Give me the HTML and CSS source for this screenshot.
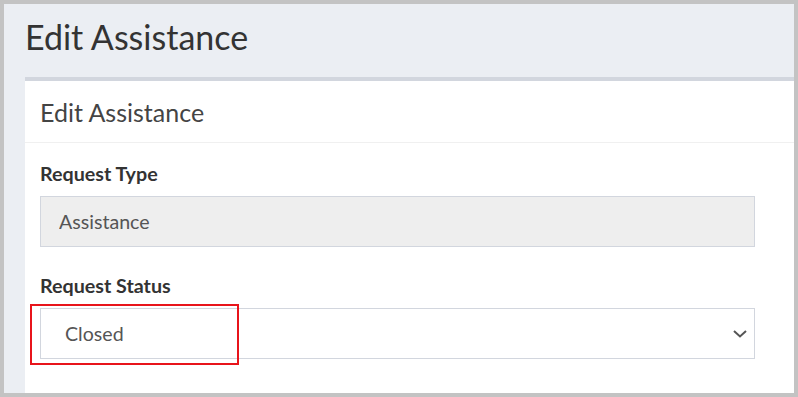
FILE: index.html
```html
<!DOCTYPE html>
<html lang="en">
<head>
    <meta charset="UTF-8">
    <meta name="viewport" content="width=device-width, initial-scale=1.0">
    <title>Edit Assistance</title>
    <link rel="stylesheet" href="styles.css">
</head>
<body>
    <div class="frame">
        <section class="content-header">
            <h1>Edit Assistance</h1>
        </section>
        <div class="box">
            <div class="box-header">
                <h3>Edit Assistance</h3>
            </div>
            <form class="box-body">
                <div class="form-group">
                    <label for="request_type">Request Type</label>
                    <input type="text" id="request_type" value="Assistance" disabled>
                </div>
                <div class="form-group">
                    <label for="request_status">Request Status</label>
                    <div class="select-wrap">
                        <select id="request_status">
                            <option>Closed</option>
                        </select>
                        <svg class="chevron" width="14" height="8" viewBox="0 0 14 8"><path d="M1 1l6 5.5L13 1" fill="none" stroke="#555" stroke-width="2"/></svg>
                        <span class="highlight"></span>
                    </div>
                </div>
            </form>
        </div>
    </div>
</body>
</html>
```

FILE: styles.css
```css
body { margin: 0; font-family: Lato, "Liberation Sans", sans-serif; background-color: #c3c3c3; }
.frame {
    width: 790px;
    height: 389px;
    border: 4px solid #c3c3c3;
    background-color: #ebeef3;
    overflow: hidden;
}
.content-header { padding: 11px 21px 0 21px; height: 62px; }
.content-header h1 { margin: 0; font-size: 34px; font-weight: normal; color: #333; line-height: 44px; }
.box { margin-left: 21px; background-color: #fff; border-top: 4px solid #d2d6de; height: 400px; }
.box-header { height: 61px; border-bottom: 1px solid #f0f0f0; padding: 0 15px; display: flex; align-items: center; }
.box-header h3 { margin: 0; font-size: 25px; font-weight: normal; color: #444; }
.box-body { padding: 19px 15px 0 15px; }
.form-group { margin-bottom: 27px; width: 715px; }
label { display: block; font-weight: bold; font-size: 19.7px; color: #333; margin-bottom: 11px; }
input[type="text"], select {
    box-sizing: border-box;
    width: 100%;
    height: 51px;
    border: 1px solid #d2d6de;
    font-family: inherit;
    font-size: 19.6px;
    color: #555;
    margin: 0;
}
input[type="text"] { padding: 0 18px; background-color: #eeeeee; }
.select-wrap { position: relative; }
select { appearance: none; -webkit-appearance: none; background-color: #fff; padding: 0 24px; border-radius: 0; }
.chevron { position: absolute; right: 8px; top: 22px; pointer-events: none; }
.highlight { position: absolute; left: -10px; top: -4px; width: 205px; height: 57px; border: 2px solid #e8141b; pointer-events: none; }
```
